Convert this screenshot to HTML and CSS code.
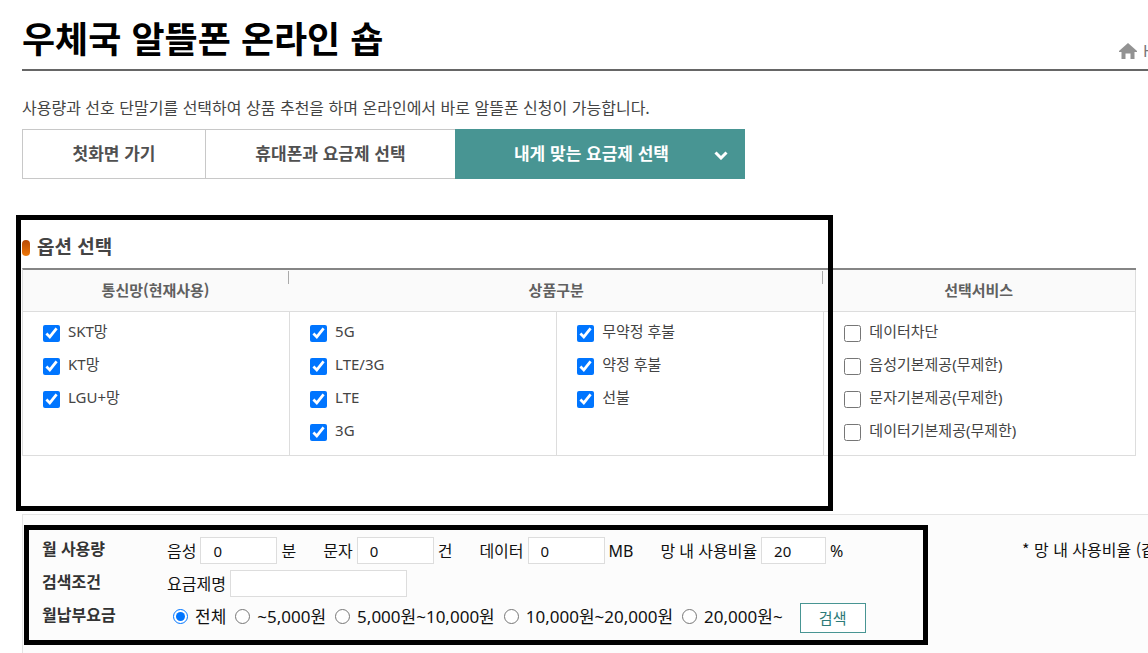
FILE: index.html
```html
<!DOCTYPE html>
<html lang="ko">
<head>
<meta charset="utf-8">
<title>우체국 알뜰폰 온라인 숍</title>
<link rel="stylesheet" href="styles.css">
</head>
<body>
<header class="page-head">
  <h1 class="page-title">우체국 알뜰폰 온라인 숍</h1>
  <div class="breadcrumb">
    <svg class="home-icon" viewBox="0 0 18 16" aria-hidden="true"><path d="M9 0 L18 8 V9 H15.5 V16 H11.5 V10.5 H6.5 V16 H2.5 V9 H0 V8 Z"/></svg>
    <span>H</span>
  </div>
</header>
<main class="content">
  <p class="intro">사용량과 선호 단말기를 선택하여 상품 추천을 하며 온라인에서 바로 알뜰폰 신청이 가능합니다.</p>
  <nav class="tabs">
    <a class="tab tab-home" href="#">첫화면 가기</a>
    <a class="tab tab-plan" href="#">휴대폰과 요금제 선택</a>
    <a class="tab tab-active" href="#"><span>내게 맞는 요금제 선택</span><svg class="chevron" viewBox="0 0 14 9" aria-hidden="true"><path d="M1.5 1.5 L7 7 L12.5 1.5"/></svg></a>
  </nav>

  <section class="options">
    <h2 class="section-title">옵션 선택</h2>
    <table class="option-table">
      <thead>
        <tr><th class="col-net"><span>통신망(현재사용)</span></th><th class="col-type" colspan="2"><span>상품구분</span></th><th>선택서비스</th></tr>
      </thead>
      <tbody>
        <tr>
          <td>
            <label class="check"><input type="checkbox" checked>SKT망</label>
            <label class="check"><input type="checkbox" checked>KT망</label>
            <label class="check"><input type="checkbox" checked>LGU+망</label>
          </td>
          <td>
            <label class="check"><input type="checkbox" checked>5G</label>
            <label class="check"><input type="checkbox" checked>LTE/3G</label>
            <label class="check"><input type="checkbox" checked>LTE</label>
            <label class="check"><input type="checkbox" checked>3G</label>
          </td>
          <td>
            <label class="check"><input type="checkbox" checked>무약정 후불</label>
            <label class="check"><input type="checkbox" checked>약정 후불</label>
            <label class="check"><input type="checkbox" checked>선불</label>
          </td>
          <td>
            <label class="check"><input type="checkbox">데이터차단</label>
            <label class="check"><input type="checkbox">음성기본제공(무제한)</label>
            <label class="check"><input type="checkbox">문자기본제공(무제한)</label>
            <label class="check"><input type="checkbox">데이터기본제공(무제한)</label>
          </td>
        </tr>
      </tbody>
    </table>
    <div class="highlight"></div>
  </section>

  <section class="search-panel">
    <form class="search-form">
      <div class="row">
        <strong class="row-name">월 사용량</strong>
        <div class="usage">
          <div class="field"><label for="voice">음성</label><input class="box" id="voice" type="text" value="0"><span>분</span></div>
          <div class="field"><label for="sms">문자</label><input class="box" id="sms" type="text" value="0"><span>건</span></div>
          <div class="field"><label for="data">데이터</label><input class="box" id="data" type="text" value="0"><span>MB</span></div>
          <div class="field"><label for="ratio">망 내 사용비율</label><input class="box box-short" id="ratio" type="text" value="20"><span>%</span></div>
        </div>
      </div>
      <div class="row">
        <strong class="row-name">검색조건</strong>
        <div class="field"><label for="plan">요금제명</label><input class="box box-long" id="plan" type="text"></div>
      </div>
      <div class="row">
        <strong class="row-name">월납부요금</strong>
        <div class="fees">
          <label class="fee"><input type="radio" name="fee" checked>전체</label>
          <label class="fee"><input type="radio" name="fee">~5,000원</label>
          <label class="fee"><input type="radio" name="fee">5,000원~10,000원</label>
          <label class="fee"><input type="radio" name="fee">10,000원~20,000원</label>
          <label class="fee"><input type="radio" name="fee">20,000원~</label>
          <button class="search-button" type="button">검색</button>
        </div>
      </div>
    </form>
    <p class="note">* 망 내 사용비율 (같</p>
  </section>
</main>
</body>
</html>
```
FILE: styles.css
```css
* {
  box-sizing: border-box;
}

body {
  margin: 0;
  padding-left: 22px;
  min-height: 100vh;
  display: flex;
  flex-direction: column;
  overflow: hidden;
  background: #fff;
  color: #111;
  font-family: "Noto Sans", "Noto Sans CJK KR", sans-serif;
  font-size: 16px;
  line-height: 24px;
}

input,
button {
  margin: 0;
  font: inherit;
}

.page-head {
  display: flex;
  justify-content: space-between;
  padding: 11px 0 5px;
  border-bottom: 2px solid #666;
}

.page-title {
  margin: 0;
  color: #000;
  font-family: "Noto Sans CJK KR", sans-serif;
  font-size: 36px;
  line-height: 53px;
  font-weight: 700;
}

.breadcrumb {
  display: flex;
  align-items: center;
  gap: 6px;
  width: 29px;
  padding-top: 27px;
  color: #777;
}

.home-icon {
  flex: none;
  width: 18px;
  height: 16px;
  fill: #929292;
}

.content {
  flex: 1;
  display: flex;
  flex-direction: column;
}

.intro {
  margin: 24px 0 10px;
  color: #444;
  font-family: "Noto Sans CJK KR", sans-serif;
  white-space: nowrap;
}

.tabs {
  display: flex;
  height: 50px;
}

.tab {
  display: flex;
  align-items: center;
  justify-content: center;
  padding-bottom: 2px;
  border: 1px solid #c8c8c8;
  color: #505050;
  font-family: "Noto Sans CJK KR", sans-serif;
  font-size: 17px;
  font-weight: 700;
  text-decoration: none;
}

.tab-home {
  width: 183px;
  border-right: 0;
}

.tab-plan {
  width: 250px;
  border-right: 0;
}

.tab-active {
  width: 290px;
  justify-content: flex-end;
  gap: 45px;
  padding-right: 16px;
  border-color: #489593;
  background: #489593;
  color: #fff;
}

.chevron {
  width: 14px;
  height: 9px;
  margin-top: 4px;
  fill: none;
  stroke: #fff;
  stroke-width: 3;
}

.options {
  position: relative;
  margin-top: 36px;
  padding: 17px 12px 58px 0;
}

.section-title {
  display: flex;
  align-items: center;
  gap: 7px;
  margin: 0 0 8px;
  color: #444;
  font-family: "Noto Sans CJK KR", sans-serif;
  font-size: 19px;
  line-height: 28px;
}

.section-title::before {
  content: "";
  width: 8px;
  height: 16px;
  margin-top: 4px;
  border-radius: 4px;
  background: linear-gradient(#b84a08, #f07808);
}

.highlight {
  position: absolute;
  top: 0;
  bottom: 3px;
  left: -6px;
  width: 817px;
  border: 5px solid #000;
  pointer-events: none;
}

.option-table {
  width: 100%;
  table-layout: fixed;
  border-collapse: separate;
  border-spacing: 0;
  border-top: 2px solid #858585;
  border-left: 1px solid #ddd;
  color: #444;
  font-size: 15px;
}

.option-table th {
  padding: 0 2px 2px 0;
  height: 42px;
  border-bottom: 1px solid #ddd;
  background: #fafafa;
  color: #606060;
  font-family: "Noto Sans CJK KR", sans-serif;
}

.option-table th:last-child {
  border-right: 1px solid #ddd;
}

.col-net {
  width: 24%;
}

.col-type {
  width: 48%;
}

.option-table .col-net,
.option-table .col-type {
  background: linear-gradient(#aaa, #aaa) top 1px right 1px / 1px 13px no-repeat, #fafafa;
}

.option-table td {
  padding: 3px 0 8px 20px;
  border-right: 1px solid #ddd;
  border-bottom: 1px solid #ddd;
  vertical-align: top;
}

.check {
  display: flex;
  align-items: center;
  gap: 8px;
  height: 33px;
  line-height: 33px;
}

.check input {
  width: 17px;
  height: 17px;
  margin-top: 4px;
}

.search-panel {
  flex: 1;
  display: flex;
  align-items: flex-start;
  padding: 10px 0 0 1px;
  border: solid #e4e4e4;
  border-width: 1px 0 0 1px;
  background: #fcfcfc;
}

.search-form {
  flex: none;
  display: flex;
  flex-direction: column;
  gap: 6px;
  width: 904px;
  padding: 7px 13px 10px;
  border: 5px solid #000;
}

.row {
  display: flex;
  align-items: center;
  height: 27px;
  white-space: nowrap;
}

.row-name {
  width: 125px;
  padding-bottom: 4px;
  color: #333;
}

.usage {
  display: flex;
  gap: 27px;
}

.field {
  display: flex;
  align-items: center;
  gap: 4px;
}

.box {
  width: 77px;
  height: 27px;
  padding: 0 12px;
  border: 1px solid #ddd;
  background: #fff;
  color: #111;
  font-size: 15px;
}

.box-short {
  width: 65px;
}

.box-long {
  width: 177px;
}

.fees {
  display: flex;
  align-items: center;
  gap: 9px;
  padding-left: 6px;
}

.fee {
  display: flex;
  align-items: center;
  gap: 7px;
  font-size: 17px;
}

.fee input {
  width: 15px;
  height: 15px;
}

.search-button {
  width: 66px;
  height: 30px;
  margin: 3px 0 0 8px;
  padding: 0;
  border: 1px solid #489593;
  background: #fff;
  color: #2c7a78;
  font-size: 15px;
}

.note {
  margin: 12px 0 0 94px;
  font-family: "Noto Sans CJK KR", sans-serif;
  white-space: nowrap;
}
```
